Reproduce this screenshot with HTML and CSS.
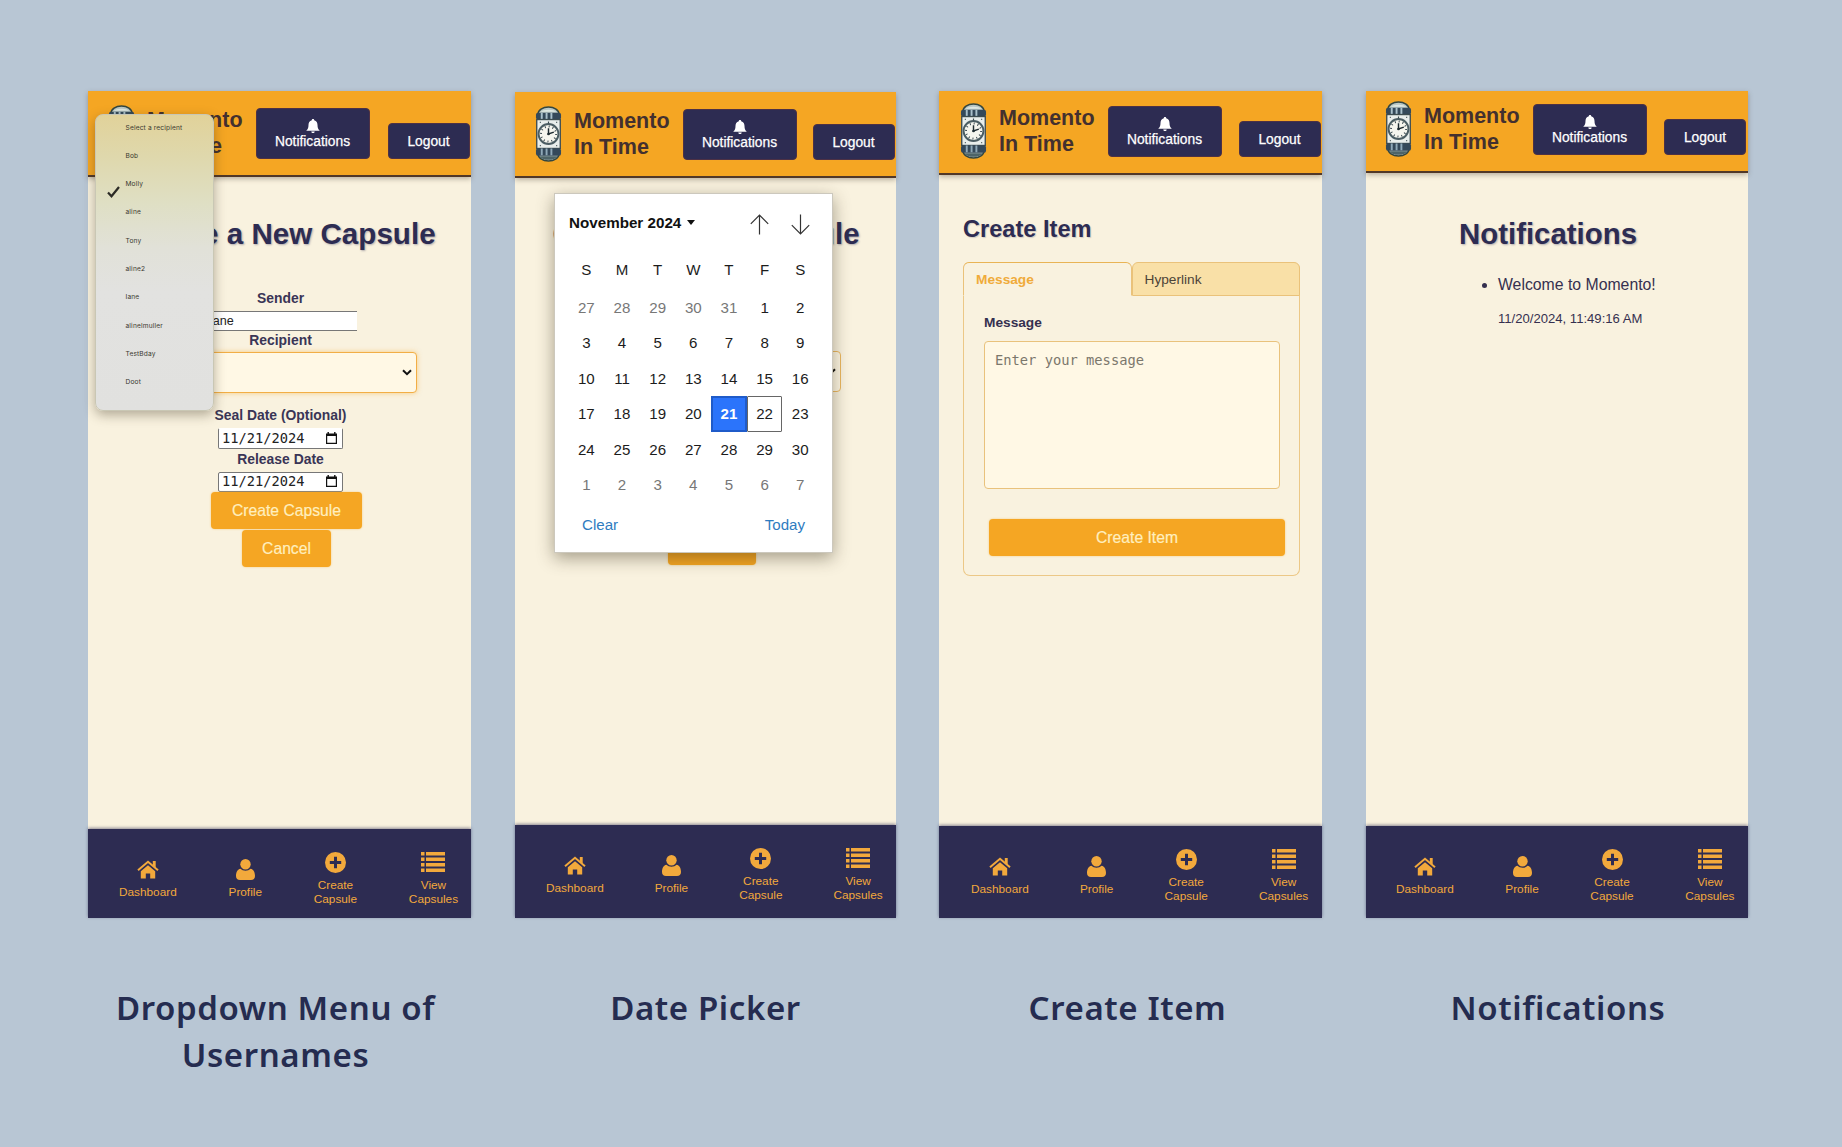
FILE: index.html
```html
<!DOCTYPE html>
<html lang="en">
<head>
<meta charset="utf-8">
<title>Momento In Time – screens</title>
<link rel="stylesheet" href="styles.css">
</head>
<body>
<svg class="sprite" aria-hidden="true">
  <symbol id="logo" viewBox="0 0 28 58">
    <path d="M3 9C3 4 8 1 14 1s11 3 11 8v40c0 5-5 8-11 8S3 54 3 49z" fill="#b9c7c4" stroke="#33463f" stroke-width="1.6"/>
    <path d="M6 6c2-3 14-3 16 0z" fill="#dfe8e2"/>
    <rect x="1" y="7" width="26" height="7" rx="2" fill="#34495a"/>
    <path d="M7 7v7M12 7v7M17 7v7" stroke="#a9c0cb" stroke-width="2"/>
    <rect x="1.8" y="14" width="24.4" height="30" fill="#e9eeec" stroke="#3c4c50" stroke-width="1.4"/>
    <circle cx="14" cy="29" r="10.3" fill="#f5f5ee" stroke="#4b5d63" stroke-width="2"/>
    <circle cx="14" cy="29" r="7.8" fill="none" stroke="#33424a" stroke-width="2" stroke-dasharray="1 3.08"/>
    <path d="M14 23v6l5.5-2" fill="none" stroke="#1d2a30" stroke-width="1.5"/>
    <circle cx="14" cy="29" r="1.4" fill="#1d2a30"/>
    <path d="M5 17h1M22 17h1M5 41h1M22 41h1M14 16v2" stroke="#3c4c50" stroke-width="1.2"/>
    <rect x="1" y="44" width="26" height="7.5" rx="2" fill="#34495a"/>
    <path d="M7 44v7M12 44v7M17 44v7" stroke="#8fa9b8" stroke-width="2"/>
    <path d="M5 52h18c-2 5-16 5-18 0z" fill="#4d6468"/>
  </symbol>
  <symbol id="bell" viewBox="0 0 14 14">
    <path d="M7 0c.8 0 1.2.5 1.2 1.200C10.600 1.800 11.500 3.700 11.500 6c0 3 .8 4.300 2.300 5.800H.2C1.700 10.300 2.500 9 2.500 6c0-2.300.9-4.200 3.300-4.800C5.800.5 6.200 0 7 0zM5.300 12.400h3.400C8.600 13.400 8 14 7 14s-1.600-.6-1.700-1.600z" fill="#fff"/>
  </symbol>
  <symbol id="home" viewBox="0 0 22 19">
    <path d="M1 10.200 11 1.800l10 8.400" fill="none" stroke="currentColor" stroke-width="2"/>
    <path d="M15.800 1h2.900v7l-2.900-2.500z" fill="currentColor"/>
    <path d="M3.800 11.200 11 5.200l7.200 6V18.600h-5v-5h-4.400v5h-5z" fill="currentColor"/>
  </symbol>
  <symbol id="user" viewBox="0 0 19 21">
    <circle cx="9.500" cy="5.300" r="5.200" fill="currentColor"/>
    <path d="M4.500 9.800C1 10.300 0 14 0 17c0 2.500 1.500 4 4 4h11c2.500 0 4-1.500 4-4 0-3-1-6.700-4.500-7.200-1.200 1.200-3 2-5 2s-3.800-.8-5-2z" fill="currentColor"/>
  </symbol>
  <symbol id="plus" viewBox="0 0 21 21">
    <path fill-rule="evenodd" d="M10.500 0a10.500 10.500 0 1 0 0 21 10.500 10.500 0 0 0 0-21zM9 4.800h3V9h4.200v3H12v4.200H9V12H4.800V9H9z" fill="currentColor"/>
  </symbol>
  <symbol id="list" viewBox="0 0 24 20">
    <path d="M0 0h3.500v3.500H0zM5 0h19v3.500H5zM0 5.500h3.500V9H0zM5 5.500h19V9H5zM0 11h3.500v3.500H0zM5 11h19v3.500H5zM0 16.500h3.500V20H0zM5 16.500h19V20H5z" fill="currentColor"/>
  </symbol>
  <symbol id="cal" viewBox="0 0 11 12">
    <path d="M.6 2.500h9.800v8.900H.6z" fill="none" stroke="#111" stroke-width="1.200"/>
    <path d="M0 1.500h11v2.500H0zM1.500 0h1.400v2H1.500zM8.100 0h1.400v2H8.100z" fill="#111"/>
  </symbol>
</svg>

<main class="board">
  <figure class="screen screen-dropdown">
    <div class="phone">
      <header class="topbar">
        <svg class="logo"><use href="#logo"/></svg>
        <div class="brand">Momento<br>In Time</div>
        <button class="btn-dark btn-notify"><svg class="bell"><use href="#bell"/></svg>Notifications</button>
        <button class="btn-dark btn-logout">Logout</button>
      </header>
      <section class="content capsule-form">
        <h1 class="page-title">Create a New Capsule</h1>
        <label class="field-label label-sender">Sender</label>
        <div class="text-input">Jane</div>
        <label class="field-label label-recipient">Recipient</label>
        <div class="select-box select-focus"><svg class="chevron" viewBox="0 0 10 7"><path d="M1 1.200 5 5.200l4-4" fill="none" stroke="#111" stroke-width="2"/></svg></div>
        <label class="field-label label-seal">Seal Date (Optional)</label>
        <div class="date-input date-seal">11/21/2024<svg class="cal"><use href="#cal"/></svg></div>
        <label class="field-label label-release">Release Date</label>
        <div class="date-input">11/21/2024<svg class="cal"><use href="#cal"/></svg></div>
        <button class="btn-primary btn-create">Create Capsule</button>
        <button class="btn-primary btn-cancel">Cancel</button>
      </section>
      <nav class="tabbar">
        <ul class="tabs">
          <li><svg class="ico-home"><use href="#home"/></svg>Dashboard</li>
          <li><svg class="ico-user"><use href="#user"/></svg>Profile</li>
          <li><svg class="ico-plus"><use href="#plus"/></svg>Create<br>Capsule</li>
          <li><svg class="ico-list"><use href="#list"/></svg>View<br>Capsules</li>
        </ul>
      </nav>
      <ul class="menu">
        <li>Select a recipient</li>
        <li>Bob</li>
        <li>Molly<svg class="check" viewBox="0 0 13 12"><path d="M1 6.500 4.500 10.300 12 1" fill="none" stroke="#2c2b26" stroke-width="2.200"/></svg></li>
        <li>aline</li>
        <li>Tony</li>
        <li>aline2</li>
        <li>Iane</li>
        <li>alinelmuller</li>
        <li>TestBday</li>
        <li>Doot</li>
      </ul>
    </div>
    <figcaption class="caption">Dropdown Menu of<br>Usernames</figcaption>
  </figure>

  <figure class="screen screen-picker">
    <div class="phone">
      <header class="topbar">
        <svg class="logo"><use href="#logo"/></svg>
        <div class="brand">Momento<br>In Time</div>
        <button class="btn-dark btn-notify"><svg class="bell"><use href="#bell"/></svg>Notifications</button>
        <button class="btn-dark btn-logout">Logout</button>
      </header>
      <section class="content capsule-form">
        <h1 class="page-title">Create a New Capsule</h1>
        <div class="select-box"><svg class="chevron" viewBox="0 0 10 7"><path d="M1 1.200 5 5.200l4-4" fill="none" stroke="#111" stroke-width="2"/></svg></div>
        <button class="btn-primary btn-cancel" aria-label="Cancel"></button>
      </section>
      <nav class="tabbar">
        <ul class="tabs">
          <li><svg class="ico-home"><use href="#home"/></svg>Dashboard</li>
          <li><svg class="ico-user"><use href="#user"/></svg>Profile</li>
          <li><svg class="ico-plus"><use href="#plus"/></svg>Create<br>Capsule</li>
          <li><svg class="ico-list"><use href="#list"/></svg>View<br>Capsules</li>
        </ul>
      </nav>
      <div class="picker">
        <div class="picker-head">
          <span class="picker-month">November 2024</span>
          <svg class="caret" viewBox="0 0 8 5"><path d="M0 0h8L4 5z" fill="#111"/></svg>
          <svg class="arrow arrow-up" viewBox="0 0 19 21"><path d="M9.500 20.500V1M.8 9.800 9.500 1l8.700 8.800" fill="none" stroke="#333" stroke-width="1.200"/></svg>
          <svg class="arrow" viewBox="0 0 19 21"><path d="M9.500.5V20M.8 11.200 9.500 20l8.700-8.800" fill="none" stroke="#333" stroke-width="1.200"/></svg>
        </div>
        <div class="days days-head"><span>S</span><span>M</span><span>T</span><span>W</span><span>T</span><span>F</span><span>S</span></div>
        <div class="days">
          <span class="off">27</span><span class="off">28</span><span class="off">29</span><span class="off">30</span><span class="off">31</span><span>1</span><span>2</span>
          <span>3</span><span>4</span><span>5</span><span>6</span><span>7</span><span>8</span><span>9</span>
          <span>10</span><span>11</span><span>12</span><span>13</span><span>14</span><span>15</span><span>16</span>
          <span>17</span><span>18</span><span>19</span><span>20</span><span class="selected">21</span><span class="today">22</span><span>23</span>
          <span>24</span><span>25</span><span>26</span><span>27</span><span>28</span><span>29</span><span>30</span>
          <span class="off">1</span><span class="off">2</span><span class="off">3</span><span class="off">4</span><span class="off">5</span><span class="off">6</span><span class="off">7</span>
        </div>
        <div class="picker-foot"><span>Clear</span><span>Today</span></div>
      </div>
    </div>
    <figcaption class="caption">Date Picker</figcaption>
  </figure>

  <figure class="screen screen-item">
    <div class="phone">
      <header class="topbar">
        <svg class="logo"><use href="#logo"/></svg>
        <div class="brand">Momento<br>In Time</div>
        <button class="btn-dark btn-notify"><svg class="bell"><use href="#bell"/></svg>Notifications</button>
        <button class="btn-dark btn-logout">Logout</button>
      </header>
      <section class="content item-form">
        <h2 class="section-title">Create Item</h2>
        <div class="tab-card">
          <div class="card-tabs"><span class="card-tab active">Message</span><span class="card-tab">Hyperlink</span></div>
          <div class="card-body">
            <label class="msg-label">Message</label>
            <div class="textarea">Enter your message</div>
            <button class="btn-primary btn-item">Create Item</button>
          </div>
        </div>
      </section>
      <nav class="tabbar">
        <ul class="tabs">
          <li><svg class="ico-home"><use href="#home"/></svg>Dashboard</li>
          <li><svg class="ico-user"><use href="#user"/></svg>Profile</li>
          <li><svg class="ico-plus"><use href="#plus"/></svg>Create<br>Capsule</li>
          <li><svg class="ico-list"><use href="#list"/></svg>View<br>Capsules</li>
        </ul>
      </nav>
    </div>
    <figcaption class="caption">Create Item</figcaption>
  </figure>

  <figure class="screen screen-notes">
    <div class="phone">
      <header class="topbar">
        <svg class="logo"><use href="#logo"/></svg>
        <div class="brand">Momento<br>In Time</div>
        <button class="btn-dark btn-notify"><svg class="bell"><use href="#bell"/></svg>Notifications</button>
        <button class="btn-dark btn-logout">Logout</button>
      </header>
      <section class="content notes">
        <h1 class="page-title">Notifications</h1>
        <ul class="note-list">
          <li class="note"><p class="note-text">Welcome to Momento!</p><p class="note-date">11/20/2024, 11:49:16 AM</p></li>
        </ul>
      </section>
      <nav class="tabbar">
        <ul class="tabs">
          <li><svg class="ico-home"><use href="#home"/></svg>Dashboard</li>
          <li><svg class="ico-user"><use href="#user"/></svg>Profile</li>
          <li><svg class="ico-plus"><use href="#plus"/></svg>Create<br>Capsule</li>
          <li><svg class="ico-list"><use href="#list"/></svg>View<br>Capsules</li>
        </ul>
      </nav>
    </div>
    <figcaption class="caption">Notifications</figcaption>
  </figure>
</main>
</body>
</html>
```
FILE: styles.css
```css
* { box-sizing: border-box; }

body {
  margin: 0;
  min-height: 1147px;
  background: #b8c6d4;
  font-family: "Liberation Sans", Arial, sans-serif;
  color: #35304f;
}

h1, h2, p, ul, figure { margin: 0; padding: 0; }
ul { list-style: none; }
button { border: 0; padding: 0; font-family: inherit; }
svg { display: block; flex: none; }
.sprite { position: absolute; width: 0; height: 0; }

.board { display: flex; padding: 91px 0 0 88px; }
.screen { flex: none; width: var(--w); }

.screen-dropdown { --w: 383px; --bar: 86px; --nav: 89px; --left: 20px; --shift: -4px; --tab-gap: 51.8px; --btn-gap: 18px; margin-right: 44px; }
.screen-picker { --w: 381px; --bar: 86px; --nav: 93px; --left: 20px; --shift: 0px; --tab-gap: 51px; --btn-gap: 16px; margin-right: 43px; }
.screen-item { --w: 383px; --bar: 84px; --nav: 92px; --left: 21px; --shift: -3px; --tab-gap: 51.2px; --btn-gap: 17px; margin-right: 44px; }
.screen-notes { --w: 382px; --bar: 82px; --nav: 92px; --left: 19px; --shift: 1px; --tab-gap: 51.6px; --btn-gap: 17.5px; }

.phone {
  position: relative;
  display: flex;
  flex-direction: column;
  height: 827px;
  background: #f9f2df;
}
.screen-picker .phone { margin-top: 1px; height: 826px; }

/* Header */
.topbar {
  flex: none;
  display: flex;
  align-items: flex-end;
  height: var(--bar);
  padding: 0 0 16px var(--left);
  background: #f5a623;
  border-bottom: 2px solid #513828;
  box-shadow: 0 2px 5px rgba(70, 55, 40, .35);
}
.logo { width: 27px; height: 58px; margin: 0 12px -3px 0; }
.brand {
  width: 108.5px;
  margin-bottom: -1px;
  font-size: 21.5px;
  font-weight: bold;
  line-height: 26.7px;
  color: #43302f;
}
.btn-dark {
  display: flex;
  flex-direction: column;
  align-items: center;
  flex: none;
  background: #2d2c52;
  border: 1px solid #4d3145;
  border-radius: 4px;
  color: #fff;
  font-size: 13.8px;
  line-height: 16px;
  -webkit-text-stroke: .25px #fff;
}
.btn-notify { width: 114px; height: 51px; padding-top: 10px; margin-right: var(--btn-gap); }
.btn-logout { width: 82px; height: 36px; padding-top: 10px; }
.bell { width: 14px; height: 14px; margin-bottom: 1px; }

.content { flex: 1; display: flex; flex-direction: column; min-height: 0; }

/* Capsule form */
.page-title {
  font-size: 29.6px;
  line-height: 36px;
  white-space: nowrap;
  color: #2d2c52;
  text-shadow: 1px 1px 2px rgba(45, 44, 82, .35);
}
.capsule-form { align-items: center; padding: 39px 0 0 2px; }
.capsule-form .page-title { margin-left: 1px; }
.field-label { font-size: 13.9px; line-height: 18px; font-weight: bold; color: #3a3556; }
.label-sender { margin-top: 37px; }
.text-input {
  width: 152px;
  height: 20px;
  margin-top: 4px;
  padding-left: 2px;
  background: #fff;
  border: solid #777;
  border-width: 1px 0;
  font-size: 12.6px;
  line-height: 18px;
  color: #222;
}
.label-recipient { margin-top: -.5px; }
.select-box {
  display: flex;
  align-items: center;
  justify-content: flex-end;
  width: 272px;
  height: 41px;
  margin-top: 3px;
  padding-right: 4px;
  background: #fff8e5;
  border: 1px solid #ecb860;
  border-radius: 4px;
}
.select-focus { border-color: #f2ae45; box-shadow: 0 0 5px rgba(245, 166, 35, .5); }
.chevron { width: 10px; height: 7px; }
.label-seal { margin-top: 13.5px; }
.date-input {
  flex: none;
  display: flex;
  align-items: center;
  justify-content: space-between;
  width: 125px;
  height: 20px;
  margin-top: 4px;
  padding: 0 5px 1px 3px;
  background: #fff;
  border: 1px solid #777;
  border-radius: 2px;
  font-family: "DejaVu Sans Mono", monospace;
  font-size: 13.7px;
  line-height: 18px;
  color: #222;
}
.date-seal { height: 21px; border-top-color: #fff; }
.label-release { margin-top: .5px; }
.cal { width: 11px; height: 12px; }
.btn-primary {
  flex: none;
  background: #f5a623;
  border-radius: 4px;
  box-shadow: 0 0 2px rgba(245, 190, 90, .8);
  color: #ffefbf;
  font-size: 15.7px;
  line-height: 35px;
  -webkit-text-stroke: .2px #ffefbf;
}
.btn-create { width: 151px; height: 37px; margin-left: 12px; }
.btn-cancel { width: 89px; height: 37px; margin: 1px 0 0 12px; }

.screen-picker .capsule-form { padding: 38px 0 0 0; }
.screen-picker .page-title { font-size: 29.4px; }
.screen-picker .select-box { width: 270px; margin-top: 99px; }
.screen-picker .btn-cancel { width: 88px; margin-top: 135.5px; }

/* Recipient menu */
.menu {
  position: absolute;
  left: 6.5px;
  top: 22.5px;
  width: 119px;
  height: 297px;
  padding-left: 30px;
  background: linear-gradient(#e1d29a 0, #dfd8ac 14%, #dfdfc4 30%, #e1e1d8 45%, #e2e2e0 60%, #e1e1df 100%);
  border: 1px solid #c9c7b4;
  border-radius: 8px;
  box-shadow: 0 4px 12px rgba(60, 50, 30, .38);
  font-family: Inter, sans-serif;
  font-size: 6.6px;
  letter-spacing: .16px;
  color: #3a382f;
}
.menu li { position: relative; height: 28.3px; line-height: 28.3px; top: -1px; white-space: nowrap; }
.check { position: absolute; left: -19px; top: 16px; width: 13px; height: 12px; }

/* Bottom bar */
.tabbar {
  flex: none;
  height: var(--nav);
  overflow: hidden;
  background: #2d2c52;
  box-shadow: 0 -1px 3px rgba(45, 44, 82, .55);
}
.tabs {
  display: flex;
  align-items: center;
  gap: var(--tab-gap);
  height: 99px;
  padding-left: calc(var(--left) + 11px);
}
.tabs li {
  display: flex;
  flex-direction: column;
  align-items: center;
  text-align: center;
  color: #f2a93c;
  font-size: 11.8px;
  line-height: 14px;
}
.tabs svg { margin-bottom: 5px; }
.ico-home { width: 22px; height: 19px; }
.tabs .ico-home { margin: 1px 0 6px; }
.ico-user { width: 19px; height: 21px; }
.ico-plus { width: 21px; height: 21px; }
.ico-list { width: 24px; height: 20px; }
.tabs .ico-list { margin-bottom: 6px; }

/* Date picker */
.picker {
  position: absolute;
  left: 39px;
  top: 101px;
  width: 279px;
  height: 360px;
  background: #fff;
  border: 1px solid #ccc8bd;
  box-shadow: 0 5px 16px rgba(50, 40, 20, .42);
  color: #1c1c1c;
  font-size: 15.1px;
}
.picker-head { display: flex; align-items: center; height: 60px; padding: 0 22px 0 14px; }
.picker-month { font-weight: bold; color: #111; padding-bottom: 3px; font-size: 15.2px; }
.caret { width: 8px; height: 5px; margin: 0 0 3px 6px; }
.arrow { width: 19px; height: 21px; }
.arrow-up { margin: 0 22px 0 auto; }
.days {
  display: grid;
  grid-template-columns: repeat(7, 35.67px);
  grid-auto-rows: 35.6px;
  padding-left: 13.5px;
  line-height: 36px;
  text-align: center;
}
.days-head { grid-auto-rows: 35.500px; line-height: 32px; }
.off { color: #777; }
.selected { background: #2b74fb; border: 2px solid #1f5bc9; color: #fff; font-weight: bold; line-height: 32px; }
.today { border: 1px solid #666; border-radius: 1px; line-height: 34px; }
.picker-foot { display: flex; justify-content: space-between; padding: 12px 27px 0 27px; line-height: 20px; color: #2f7cbf; }

/* Create item */
.item-form { padding: 37px 0 0 24px; }
.section-title { font-size: 23.6px; line-height: 34px; color: #2d2c52; text-shadow: 1px 1px 1px rgba(45, 44, 82, .2); }
.tab-card { width: 337px; height: 314px; margin-top: 16px; border: 1px solid #ecc887; border-top: 0; border-radius: 7px; }
.card-tabs { display: flex; margin: 0 -1px; }
.card-tab {
  flex: 1;
  height: 34px;
  padding-left: 12px;
  border: 1px solid #eac27a;
  border-radius: 6px 6px 0 0;
  background: #f9e0a7;
  font-size: 13.7px;
  line-height: 33px;
  color: #4d4438;
}
.card-tab.active { background: #f9f2df; border-bottom-color: transparent; font-weight: bold; color: #f0ab3a; border-top-color: #e9b455; }
.card-body { display: flex; flex-direction: column; padding: 18px 0 0 20px; }
.msg-label { font-size: 13.7px; line-height: 18px; font-weight: bold; color: #35304f; }
.textarea {
  width: 296px;
  height: 148px;
  margin-top: 9px;
  padding: 10px;
  background: #fff8e5;
  border: 1px solid #e9c27c;
  border-radius: 4px;
  font-family: "DejaVu Sans Mono", monospace;
  font-size: 13.75px;
  line-height: 16px;
  color: #7b776c;
}
.btn-item { width: 296px; height: 37px; margin: 30px 0 0 5px; line-height: 34px; }

/* Notifications */
.notes { padding-top: 43px; }
.notes .page-title { padding-left: 93px; font-size: 29.4px; }
.note-list { padding: 23px 0 0 132px; list-style: disc; }
.note::marker { font-size: 15.7px; }
.note-text { font-size: 15.8px; line-height: 20px; }
.note-date { margin-top: 16px; font-size: 13.1px; line-height: 16px; }

/* Captions */
.caption {
  position: relative;
  left: var(--shift);
  padding-top: 66px;
  font-family: "Noto Sans", sans-serif;
  font-size: 33px;
  font-weight: 600;
  letter-spacing: .6px;
  line-height: 47px;
  text-align: center;
  white-space: nowrap;
  color: #252c50;
}
```
